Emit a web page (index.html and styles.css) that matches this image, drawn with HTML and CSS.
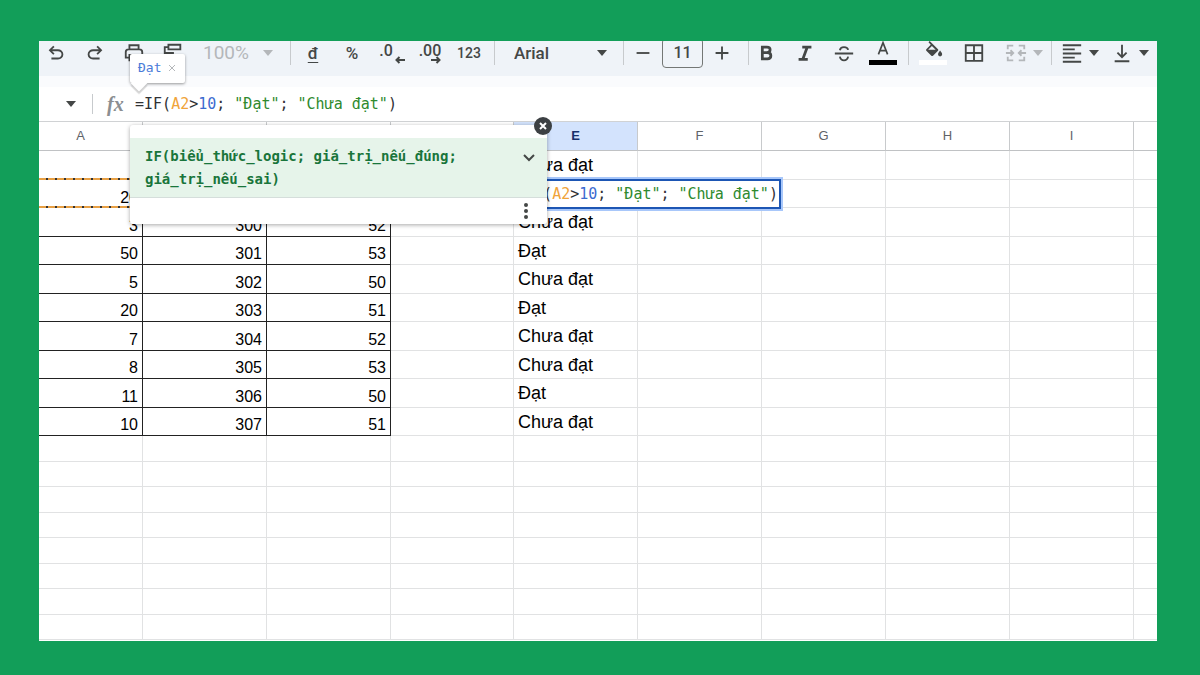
FILE: index.html
```html
<!DOCTYPE html>
<html lang="vi">
<head>
    <meta charset="UTF-8">
    <meta name="viewport" content="width=device-width, initial-scale=1.0">
    <title>Hàm IF</title>
    <link rel="stylesheet" href="styles.css">
</head>
<body>
    <main class="app">
        <div class="toolbar">
            <div class="group history">
                <button class="tool" aria-label="Hoàn tác"><svg viewBox="0 0 24 24"><path d="M7 19v-2h7.1q1.6 0 2.7-1T18 13.500t-1.200-2.500T14.100 10H7.800l2.600 2.600L9 14 4 9l5-5 1.400 1.400L7.800 8h6.300q2.400 0 4.200 1.600T20 13.500t-1.700 3.900T14.100 19z"/></svg></button>
                <button class="tool" aria-label="Làm lại"><svg viewBox="0 0 24 24"><path transform="matrix(-1 0 0 1 24 0)" d="M7 19v-2h7.100q1.600 0 2.700-1T18 13.500t-1.200-2.500T14.100 10H7.800l2.600 2.600L9 14 4 9l5-5 1.400 1.400L7.800 8h6.300q2.400 0 4.200 1.600T20 13.500t-1.700 3.900T14.100 19z"/></svg></button>
                <button class="tool" aria-label="In"><svg viewBox="0 0 24 24" class="line"><path d="M7 8V3.500h10V8M7 17H3v-6q0-3 3-3h12q3 0 3 3v6h-4M7 14h10v6H7z"/></svg></button>
                <button class="tool" aria-label="Sao chép định dạng"><svg viewBox="0 0 24 24" class="line"><path d="M7 3h13v5H7zM7 5.500H3V12h9v4M10 16h4v6h-4z"/></svg></button>
                <label class="picker zoom muted">
                    <select aria-label="Thu phóng"><option>100%</option></select>
                    <svg class="caret" viewBox="0 0 10 6"><path d="M0 0h10L5 6z"/></svg>
                </label>
            </div>
            <div class="group">
                <button class="tool currency" aria-label="Định dạng tiền tệ">đ</button>
                <button class="tool" aria-label="Định dạng phần trăm">%</button>
                <button class="tool decimal less" aria-label="Giảm số chữ số thập phân">.0<svg viewBox="0 0 10 8" class="line"><path d="M10 4H1.500M4.500 1l-3 3 3 3"/></svg></button>
                <button class="tool decimal" aria-label="Tăng số chữ số thập phân">.00<svg viewBox="0 0 10 8" class="line"><path d="M0 4h8.500M5.500 1l3 3-3 3"/></svg></button>
                <button class="tool numbers" aria-label="Định dạng khác">123</button>
            </div>
            <div class="group">
                <label class="picker font">
                    <select aria-label="Phông chữ"><option>Arial</option></select>
                    <svg class="caret" viewBox="0 0 10 6"><path d="M0 0h10L5 6z"/></svg>
                </label>
            </div>
            <div class="group size">
                <button class="step" aria-label="Giảm cỡ chữ"><svg viewBox="0 0 24 24" class="line"><path d="M5 12h14"/></svg></button>
                <input type="text" value="11" aria-label="Cỡ chữ">
                <button class="step" aria-label="Tăng cỡ chữ"><svg viewBox="0 0 24 24" class="line"><path d="M5 12h14M12 5v14"/></svg></button>
            </div>
            <div class="group style">
                <button class="tool" aria-label="Đậm"><svg viewBox="0 0 24 24" class="line heavy"><path d="M8 5.500h5q3.500 0 3.500 3T13 11.700H8zM8 11.700h5.500q3.800 0 3.800 3.300t-3.800 3.500H8z"/></svg></button>
                <button class="tool" aria-label="Nghiêng"><svg viewBox="0 0 24 24" class="line heavy"><path d="M9 5.500h10M5 19h10M14.500 5.500L9.500 19"/></svg></button>
                <button class="tool" aria-label="Gạch ngang"><svg viewBox="0 0 24 24" class="line"><path d="M2 12.500h20M7.500 9q.5-3.500 4.500-3.500T16.500 8.500M7.500 16q.8 4 4.500 4t4.500-4"/></svg></button>
                <button class="tool swatch black" aria-label="Màu văn bản"><svg viewBox="0 0 24 24" class="line"><path d="M6.500 16L12 2l5.500 14M8.500 11.500h7"/></svg></button>
            </div>
            <div class="group cells">
                <button class="tool swatch white" aria-label="Màu nền"><svg viewBox="0 0 24 24"><path d="M8 0l10 10q.8.8 0 1.600l-6 6q-1 .8-2 0l-6-6q-.8-.8 0-1.600L9.300 4.500 6.600 1.500zM10.700 6L6.200 10.500h9zM20.500 11.500q2.500 3 2.500 4.500a2.500 2.500 0 0 1-5 0q0-1.500 2.500-4.500z"/></svg></button>
                <button class="tool" aria-label="Đường viền"><svg viewBox="0 0 24 24" class="line"><path d="M3 3.500h18v17H3zM12 3.500v17M3 12h18"/></svg></button>
                <button class="drop muted" aria-label="Hợp nhất ô">
                    <svg viewBox="0 0 24 24" class="line"><path d="M9 4H3v4M15 4h6v4M9 20H3v-4M15 20h6v-4M1 12h8M6 9l3 3-3 3M23 12h-8M18 9l-3 3 3 3"/></svg>
                    <svg class="caret" viewBox="0 0 10 6"><path d="M0 0h10L5 6z"/></svg>
                </button>
            </div>
            <div class="group align">
                <button class="drop" aria-label="Căn ngang">
                    <svg viewBox="0 0 24 24" class="line"><path d="M2 3.500h20M2 8h13M2 12.500h20M2 17h13M2 21.500h20"/></svg>
                    <svg class="caret" viewBox="0 0 10 6"><path d="M0 0h10L5 6z"/></svg>
                </button>
                <button class="drop" aria-label="Căn dọc">
                    <svg viewBox="0 0 24 24" class="line"><path d="M4 21h16M12 3v13M7 11.500l5 5 5-5"/></svg>
                    <svg class="caret" viewBox="0 0 10 6"><path d="M0 0h10L5 6z"/></svg>
                </button>
            </div>
        </div>

        <div class="formula-bar">
            <button class="name-box" aria-label="Hộp tên"><svg class="caret" viewBox="0 0 10 6"><path d="M0 0h10L5 6z"/></svg></button>
            <span class="fx">fx</span>
            <div class="formula" role="textbox" aria-label="Công thức">=IF(<span class="ref">A2</span>&gt;<span class="num">10</span>; <span class="str">"Đạt"</span>; <span class="str">"Chưa đạt"</span>)</div>
            <div class="preview">Đạt <button aria-label="Đóng xem trước"><svg viewBox="0 0 8 8" class="line"><path d="M1 1l6 6M7 1L1 7"/></svg></button></div>
        </div>

        <div class="sheet">
            <table class="grid">
                <colgroup>
                    <col class="col-a"><col class="col"><col class="col"><col class="col-d"><col class="col"><col class="col"><col class="col"><col class="col"><col class="col"><col>
                </colgroup>
                <thead>
                    <tr><th>A</th><th>B</th><th>C</th><th>D</th><th class="active">E</th><th>F</th><th>G</th><th>H</th><th>I</th><th></th></tr>
                </thead>
                <tbody>
                    <tr class="data"><td class="march"></td><td></td><td></td><td></td><td>Chưa đạt</td><td></td><td></td><td></td><td></td><td></td></tr>
                    <tr class="data"><td class="march">20</td><td></td><td></td><td></td><td class="editing"><div class="editor formula">=IF(<span class="ref">A2</span>&gt;<span class="num">10</span>; <span class="str">"Đạt"</span>; <span class="str">"Chưa đạt"</span>)</div></td><td></td><td></td><td></td><td></td><td></td></tr>
                    <tr class="data"><td>3</td><td>300</td><td>52</td><td></td><td>Chưa đạt</td><td></td><td></td><td></td><td></td><td></td></tr>
                    <tr class="data"><td>50</td><td>301</td><td>53</td><td></td><td>Đạt</td><td></td><td></td><td></td><td></td><td></td></tr>
                    <tr class="data"><td>5</td><td>302</td><td>50</td><td></td><td>Chưa đạt</td><td></td><td></td><td></td><td></td><td></td></tr>
                    <tr class="data"><td>20</td><td>303</td><td>51</td><td></td><td>Đạt</td><td></td><td></td><td></td><td></td><td></td></tr>
                    <tr class="data"><td>7</td><td>304</td><td>52</td><td></td><td>Chưa đạt</td><td></td><td></td><td></td><td></td><td></td></tr>
                    <tr class="data"><td>8</td><td>305</td><td>53</td><td></td><td>Chưa đạt</td><td></td><td></td><td></td><td></td><td></td></tr>
                    <tr class="data"><td>11</td><td>306</td><td>50</td><td></td><td>Đạt</td><td></td><td></td><td></td><td></td><td></td></tr>
                    <tr class="data"><td>10</td><td>307</td><td>51</td><td></td><td>Chưa đạt</td><td></td><td></td><td></td><td></td><td></td></tr>
                    <tr><td></td><td></td><td></td><td></td><td></td><td></td><td></td><td></td><td></td><td></td></tr>
                    <tr><td></td><td></td><td></td><td></td><td></td><td></td><td></td><td></td><td></td><td></td></tr>
                    <tr><td></td><td></td><td></td><td></td><td></td><td></td><td></td><td></td><td></td><td></td></tr>
                    <tr><td></td><td></td><td></td><td></td><td></td><td></td><td></td><td></td><td></td><td></td></tr>
                    <tr><td></td><td></td><td></td><td></td><td></td><td></td><td></td><td></td><td></td><td></td></tr>
                    <tr><td></td><td></td><td></td><td></td><td></td><td></td><td></td><td></td><td></td><td></td></tr>
                    <tr><td></td><td></td><td></td><td></td><td></td><td></td><td></td><td></td><td></td><td></td></tr>
                    <tr><td></td><td></td><td></td><td></td><td></td><td></td><td></td><td></td><td></td><td></td></tr>
                </tbody>
            </table>

            <div class="help">
                <div class="signature">
                    <code>IF(biểu_thức_logic; giá_trị_nếu_đúng; giá_trị_nếu_sai)</code>
                    <button aria-label="Thu gọn"><svg viewBox="0 0 12 8" class="line"><path d="M1 1l5 5 5-5"/></svg></button>
                </div>
                <div class="help-footer">
                    <button aria-label="Tuỳ chọn khác"><svg viewBox="0 0 4 16"><circle cx="2" cy="2" r="2"/><circle cx="2" cy="8" r="2"/><circle cx="2" cy="14" r="2"/></svg></button>
                </div>
                <button class="close" aria-label="Đóng"><svg viewBox="0 0 8 8" class="line"><path d="M1 1l6 6M7 1L1 7"/></svg></button>
            </div>
        </div>
    </main>
</body>
</html>
```
FILE: styles.css
```css
* {
    box-sizing: border-box;
}
body {
    display: flex;
    height: 100vh;
    margin: 0;
    padding: 41px 43px 34px 39px;
    background-color: #129e59;
    font-family: "Liberation Sans", Arial, sans-serif;
}
button {
    display: flex;
    align-items: center;
    justify-content: center;
    padding: 0;
    border: none;
    background: none;
    color: inherit;
    font: inherit;
    cursor: pointer;
}
svg {
    flex: none;
    fill: currentColor;
}
.line {
    fill: none;
    stroke: currentColor;
    stroke-width: 2;
}
.heavy {
    stroke-width: 3;
}
.caret {
    width: 10px;
    height: 6px;
}
.app {
    display: flex;
    flex: 1;
    flex-direction: column;
    min-width: 0;
    overflow: hidden;
    background-color: white;
}

/* Toolbar */
.toolbar {
    display: flex;
    align-items: center;
    height: 46px;
    padding-bottom: 12px;
    border-bottom: 11px solid #fafbfd;
    background-color: #eff3f8;
    color: #444746;
    font-family: Roboto, sans-serif;
    font-size: 17px;
    font-weight: 500;
}
.group {
    display: flex;
    align-items: center;
    gap: 5px;
    height: 24px;
    padding: 0 8px 0 5px;
    border-right: 1px solid #c7cacd;
}
.history {
    padding: 0 9px 0 0;
}
.tool {
    width: 34px;
    height: 24px;
}
.tool svg,
.step svg,
.drop > svg:first-child {
    width: 22px;
    height: 22px;
}
.muted {
    color: #b4b7ba;
}
.picker {
    display: flex;
    align-items: center;
    justify-content: space-between;
    padding: 0 8px;
}
.picker select {
    padding: 0;
    border: none;
    appearance: none;
    background: none;
    color: inherit;
    font: inherit;
}
.zoom {
    width: 86px;
}
.zoom select {
    font-size: 19px;
    font-weight: 400;
}
.font {
    width: 115px;
    padding-left: 14px;
}
.currency {
    text-decoration: underline;
    text-underline-offset: 3px;
}
.numbers {
    font-size: 14px;
}
.tool.decimal {
    position: relative;
    padding-bottom: 4px;
    font-size: 16px;
}
.tool.less {
    padding-right: 10px;
}
.tool.decimal svg {
    position: absolute;
    right: 6px;
    bottom: 1px;
    width: 10px;
    height: 8px;
}
.tool.less svg {
    right: 3px;
}
.step {
    width: 28px;
    height: 24px;
}
.size input {
    width: 41px;
    height: 30px;
    padding: 0;
    border: 1px solid #747775;
    border-radius: 4px;
    background: none;
    color: inherit;
    font: inherit;
    font-size: 16px;
    text-align: center;
}
.size {
    padding-right: 12px;
}
.style {
    padding-left: 0;
}
.swatch {
    position: relative;
    align-items: flex-start;
}
.tool.swatch svg {
    width: 20px;
    height: 20px;
}
.swatch::after {
    position: absolute;
    bottom: 0;
    left: 3px;
    width: 28px;
    height: 5px;
    background-color: white;
    content: "";
}
.black::after {
    background-color: black;
}
.drop {
    gap: 6px;
}
.cells {
    gap: 7px;
    padding-left: 7px;
}
.cells .drop {
    padding-left: 7px;
}
.align {
    gap: 12px;
    padding: 0 6px 0 9px;
    border: none;
}

/* Formula bar */
.formula-bar {
    position: relative;
    display: flex;
    flex: none;
    align-items: center;
    height: 35px;
    border-bottom: 1px solid #d0d2d4;
}
.name-box {
    justify-content: flex-end;
    width: 54px;
    height: 20px;
    padding-right: 16px;
    border-right: 1px solid #c7cacd;
    color: #444746;
}
.fx {
    width: 42px;
    padding-left: 14px;
    color: #8b8e91;
    font-family: "Liberation Serif", serif;
    font-size: 20px;
    font-style: italic;
    font-weight: bold;
}
.formula {
    color: #303134;
    font-family: "DejaVu Sans Mono", monospace;
    font-size: 15px;
    white-space: nowrap;
}
.ref {
    color: #f0a43a;
}
.num {
    color: #3c6bd0;
}
.str {
    color: #2f8a2f;
}
.preview {
    position: absolute;
    top: -33px;
    left: 91px;
    display: flex;
    align-items: center;
    gap: 7px;
    height: 29px;
    padding: 0 9px 2px 8px;
    border-radius: 2px;
    background-color: white;
    box-shadow: 0 1px 3px rgba(0, 0, 0, 0.4);
    color: #4a7bd8;
    font-family: "DejaVu Sans Mono", monospace;
    font-size: 13px;
}
.preview::after {
    position: absolute;
    bottom: -6px;
    left: 3px;
    width: 12px;
    height: 12px;
    background-color: white;
    box-shadow: 2px 2px 2px rgba(0, 0, 0, 0.2);
    clip-path: polygon(120% -20%, 120% 120%, -20% 120%);
    transform: rotate(45deg);
    content: "";
}
.preview svg {
    width: 8px;
    height: 8px;
    color: #b4b7ba;
    stroke-width: 1;
}

/* Grid */
.sheet {
    position: relative;
    flex: 1;
    min-height: 0;
}
.grid {
    width: 100%;
    border-spacing: 0;
    table-layout: fixed;
    font-size: 16px;
    line-height: 20px;
}
.col-a {
    width: 104px;
}
.col {
    width: 124px;
}
.col-d {
    width: 123px;
}
.grid th {
    height: 29px;
    padding: 0;
    border-right: 1px solid #c8cacc;
    border-bottom: 1px solid #c0c2c4;
    color: #5f6368;
    font-family: "Liberation Sans", Arial, sans-serif;
    font-size: 13px;
    font-weight: 400;
}
.grid th:first-child {
    padding-right: 20px;
}
.grid th.active {
    background-color: #d3e3fd;
    color: #17306b;
    font-weight: 700;
}
.grid td {
    height: 26px;
    padding: 0 4px;
    border-right: 1px solid #e1e2e3;
    border-bottom: 1px solid #e1e2e3;
    white-space: nowrap;
}
.grid tr:nth-child(even) td {
    height: 25px;
}
.grid .data td {
    height: 29px;
}
.grid .data:nth-child(even) td {
    height: 28px;
}
.data td:nth-child(-n+3) {
    padding-right: 4px;
    border-color: #222;
    text-align: right;
    vertical-align: bottom;
}
.data td:nth-child(5) {
    font-size: 18px;
}
.grid th:last-child,
.grid td:last-child {
    border-right: none;
}
/* Outline of the range used in the formula */
.data .march {
    background: repeating-linear-gradient(90deg, #e8a044 0 7px, #333 7px 9px) bottom / 100% 2px no-repeat;
    border-bottom: none;
}
.editing {
    position: relative;
}
.grid .editor {
    position: absolute;
    top: -1px;
    left: -1px;
    padding: 3px 1px;
    border: 2px solid #1d56b4;
    background-color: white;
    box-shadow: 0 0 0 2px #a8c7fa;
    font-size: 15px;
}

/* Function help */
.help {
    position: absolute;
    top: 3px;
    left: 91px;
    width: 417px;
    padding-top: 13px;
    border-radius: 3px;
    background-color: white;
    box-shadow: 0 1px 4px rgba(0, 0, 0, 0.35);
    color: #444746;
}
.signature {
    display: flex;
    align-items: flex-start;
    justify-content: space-between;
    padding: 7px 12px 6px 15px;
    border-bottom: 1px solid #d5dedb;
    background-color: #e6f4ea;
}
.signature code {
    width: 340px;
    color: #19753b;
    font-family: "DejaVu Sans Mono", monospace;
    font-size: 14px;
    font-weight: bold;
    line-height: 23px;
}
.signature button {
    height: 26px;
}
.signature svg {
    width: 12px;
    height: 8px;
}
.help-footer {
    display: flex;
    justify-content: flex-end;
    height: 26px;
    padding-right: 19px;
}
.help-footer svg {
    width: 4px;
    height: 16px;
}
.close {
    position: absolute;
    top: -8px;
    right: -5px;
    width: 18px;
    height: 18px;
    border-radius: 50%;
    background-color: #3c4043;
    color: white;
}
.close svg {
    width: 8px;
    height: 8px;
}
```
